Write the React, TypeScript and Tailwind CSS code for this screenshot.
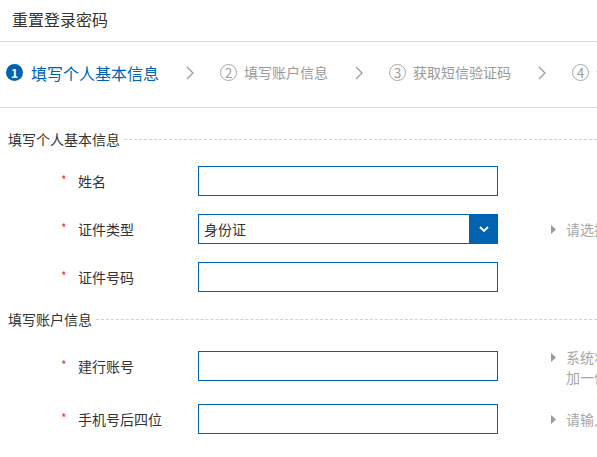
import React from "react";

const font = { fontFamily: '"Noto Sans CJK SC", "Noto Sans", sans-serif' };

function Chevron() {
  return (
    <svg width="8" height="14" viewBox="0 0 8 14" className="ml-[27px] mr-[26px] shrink-0">
      <path d="M1 1 L7 7 L1 13" fill="none" stroke="#9a9a9a" strokeWidth="1.3" />
    </svg>
  );
}

function StepCircle({ n, active }: { n: number; active?: boolean }) {
  return active ? (
    <div className="w-[17px] h-[17px] rounded-full bg-[#0063b1] text-white text-[12px] font-bold leading-none flex items-center justify-center shrink-0">
      {n}
    </div>
  ) : (
    <div className="w-[17px] h-[17px] rounded-full border border-[#a8a8a8] text-[#9a9a9a] text-[13px] leading-none flex items-center justify-center shrink-0">
      {n}
    </div>
  );
}

function SectionTitle({ text, className }: { text: string; className?: string }) {
  return (
    <div className={"flex items-center h-5 pl-[8px] " + (className ?? "")}>
      <span className="text-[14px] leading-5 text-[#333] whitespace-nowrap">{text}</span>
      <div className="flex-1 ml-[4px] border-t border-dashed border-[#d0d0d0]" />
    </div>
  );
}

function Label({ text }: { text: string }) {
  return (
    <div className="w-[198px] shrink-0 flex items-center h-[30px] pl-[61px]">
      <span className="text-[#e4393c] text-[12px] leading-none -mt-[3px] w-[17px]">*</span>
      <span className="text-[14px] text-[#333] whitespace-nowrap">{text}</span>
    </div>
  );
}

function Triangle() {
  return (
    <svg width="5" height="9" viewBox="0 0 5 9" className="shrink-0">
      <path d="M0 0 L5 4.5 L0 9 Z" fill="#9a9a9a" />
    </svg>
  );
}

function Hint({ lines, className }: { lines: string[]; className?: string }) {
  return (
    <div className={"flex ml-[53px] " + (className ?? "")}>
      <div className="h-5 flex items-center">
        <Triangle />
      </div>
      <div className="ml-[10px] text-[14px] leading-5 text-[#a6a6a6] whitespace-nowrap">
        {lines.map((l, i) => (
          <div key={i}>{l}</div>
        ))}
      </div>
    </div>
  );
}

function TextInput() {
  return <div className="w-[300px] h-[30px] shrink-0 border border-[#0063b1] bg-white" />;
}

export default function App() {
  return (
    <div className="w-[597px] h-[457px] overflow-hidden bg-white" style={font}>
      <div className="h-[42px] border-b border-[#dcdcdc] flex items-center pl-[12px] pb-[3px]">
        <span className="text-[16px] text-[#333]">重置登录密码</span>
      </div>

      <div className="h-[66px] border-b border-[#dcdcdc] flex items-center pl-[6px] pb-[4px] whitespace-nowrap">
        <StepCircle n={1} active />
        <span className="ml-[8px] text-[16px] text-[#0063b1]">填写个人基本信息</span>
        <Chevron />
        <StepCircle n={2} />
        <span className="ml-[7px] text-[14px] text-[#9a9a9a]">填写账户信息</span>
        <Chevron />
        <StepCircle n={3} />
        <span className="ml-[7px] text-[14px] text-[#9a9a9a]">获取短信验证码</span>
        <Chevron />
        <StepCircle n={4} />
        <span className="ml-[7px] text-[14px] text-[#9a9a9a]">设置新密码</span>
      </div>

      <SectionTitle text="填写个人基本信息" className="mt-[21px]" />

      <div className="flex items-center mt-[17px]">
        <Label text="姓名" />
        <TextInput />
      </div>

      <div className="flex items-center mt-[18px]">
        <Label text="证件类型" />
        <div className="w-[300px] h-[30px] shrink-0 flex">
          <div className="flex-1 border border-r-0 border-[#0063b1] flex items-center pl-[5px] text-[14px] text-[#333]">
            身份证
          </div>
          <div className="w-[29px] h-full bg-[#0063b1] flex items-center justify-center">
            <svg width="10" height="6" viewBox="0 0 10 6">
              <path d="M1 1 L5 5 L9 1" fill="none" stroke="#fff" strokeWidth="1.8" />
            </svg>
          </div>
        </div>
        <Hint lines={["请选择证件类型"]} />
      </div>

      <div className="flex items-center mt-[18px]">
        <Label text="证件号码" />
        <TextInput />
      </div>

      <SectionTitle text="填写账户信息" className="mt-[17px]" />

      <div className="flex items-start mt-[22px]">
        <Label text="建行账号" />
        <TextInput />
        <Hint lines={["系统将在您输入的账号后", "加一位校验码"]} className="-mt-[4px]" />
      </div>

      <div className="flex items-center mt-[17px]">
        <Label text="手机号后四位" />
        <TextInput />
        <Hint lines={["请输入手机号后四位"]} />
      </div>
    </div>
  );
}
